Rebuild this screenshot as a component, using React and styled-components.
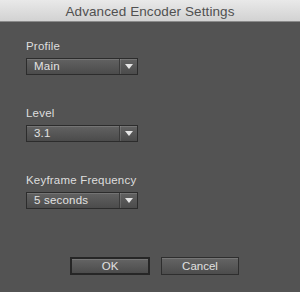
import React from "react";
import styled, { createGlobalStyle } from "styled-components";

const GlobalStyle = createGlobalStyle`
  html, body {
    margin: 0;
    padding: 0;
    background: #535353;
  }
  * {
    box-sizing: border-box;
  }
`;

const fields = [
  { label: "Profile", value: "Main" },
  { label: "Level", value: "3.1" },
  { label: "Keyframe Frequency", value: "5 seconds" },
];

const App = () => {
  return (
    <>
      <GlobalStyle />
      <Window>
        <TitleBar>Advanced Encoder Settings</TitleBar>
        <Content>
          {fields.map((f) => (
            <Field key={f.label}>
              <Label>{f.label}</Label>
              <Select>
                <SelectValue>{f.value}</SelectValue>
                <SelectArrow>
                  <svg width="8" height="5" viewBox="0 0 8 5">
                    <path d="M0 0 H8 L4 5 Z" fill="#e6e6e6" />
                  </svg>
                </SelectArrow>
              </Select>
            </Field>
          ))}
        </Content>
        <Footer>
          <Button $primary>OK</Button>
          <Button>Cancel</Button>
        </Footer>
      </Window>
    </>
  );
};

export default App;

const Window = styled.div`
  width: 300px;
  height: 292px;
  display: flex;
  flex-direction: column;
  background: #535353;
  font-family: "Liberation Sans", Arial, sans-serif;
  overflow: hidden;
`;

const TitleBar = styled.div`
  height: 22px;
  flex: none;
  display: flex;
  align-items: center;
  justify-content: center;
  padding-top: 1px;
  background: linear-gradient(#e9e9e9, #d2d2d2);
  border-bottom: 1px solid #8a8a8a;
  color: #505050;
  font-size: 13.5px;
  letter-spacing: 0.1px;
`;

const Content = styled.div`
  display: flex;
  flex-direction: column;
  gap: 32px;
  padding: 18px 0 0 26px;
`;

const Field = styled.div`
  display: flex;
  flex-direction: column;
  gap: 5px;
`;

const Label = styled.div`
  color: #dedede;
  font-size: 11.5px;
  line-height: 13px;
  height: 13px;
  letter-spacing: 0.2px;
`;

const Select = styled.div`
  width: 112px;
  height: 17px;
  display: flex;
  border: 1px solid #2c2c2c;
  background: linear-gradient(#626262, #4b4b4b);
  box-shadow: inset 0 1px 0 rgba(255, 255, 255, 0.12);
`;

const SelectValue = styled.div`
  flex: 1;
  color: #e2e2e2;
  font-size: 11.5px;
  line-height: 15px;
  padding-left: 7px;
  letter-spacing: 0.2px;
`;

const SelectArrow = styled.div`
  width: 18px;
  display: flex;
  align-items: center;
  justify-content: center;
  border-left: 1px solid #3a3a3a;
  box-shadow: inset 1px 0 0 rgba(255, 255, 255, 0.12);
`;

const Footer = styled.div`
  margin-top: auto;
  display: flex;
  gap: 11px;
  padding: 0 0 17px 70px;
`;

const Button = styled.div`
  width: ${({ $primary }) => ($primary ? "80px" : "78px")};
  height: 18px;
  display: flex;
  align-items: center;
  justify-content: center;
  color: #e0e0e0;
  font-size: 11.5px;
  background: linear-gradient(#646464, #4c4c4c);
  border: ${({ $primary }) =>
    $primary ? "2px solid #262626" : "1px solid #2e2e2e"};
  box-shadow: inset 0 1px 0 rgba(255, 255, 255, 0.12);
`;
